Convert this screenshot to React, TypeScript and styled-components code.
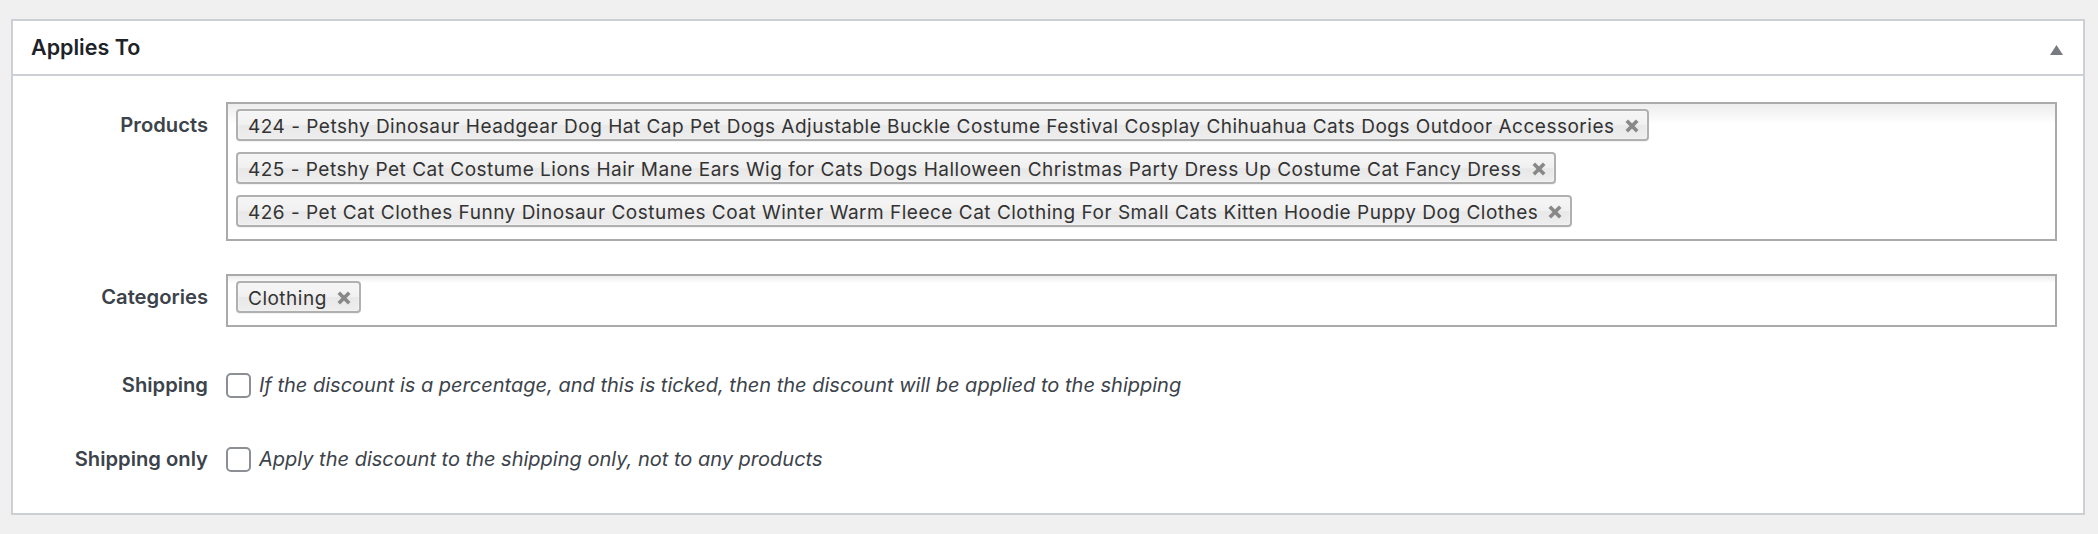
import React from 'react';
import styled, { createGlobalStyle } from 'styled-components';

const GlobalStyle = createGlobalStyle`
  html, body { margin: 0; padding: 0; background: #f0f0f1; }
  body { font-family: Inter, "Liberation Sans", sans-serif; color: #3c434a; }
  * { box-sizing: border-box; }
`;

const Page = styled.div`
  padding: 19px 13px 21px 11px;
`;

const Panel = styled.section`
  background: #fff;
  border: 2px solid #ccd0d4;
`;

const Header = styled.header`
  display: flex;
  align-items: center;
  justify-content: space-between;
  height: 55px;
  padding: 0 20px 0 18px;
  border-bottom: 2px solid #ccd0d4;
`;

const Title = styled.h2`
  margin: 0;
  font-size: 21.5px;
  font-weight: 600;
  color: #1d2327;
  line-height: 1;
`;

const Toggle = styled.svg`
  width: 13px;
  height: 10px;
  margin-top: 5px;
  fill: #787c82;
`;

const Body = styled.div`
  padding: 26px 26px 38px 0;
`;

const Row = styled.div<{ $top?: number; $center?: boolean }>`
  display: grid;
  grid-template-columns: 195px 1fr;
  column-gap: 18px;
  align-items: ${(p) => (p.$center ? 'center' : 'start')};
  margin-top: ${(p) => p.$top ?? 0}px;
  min-height: ${(p) => (p.$center ? '30px' : '0')};
`;

const Label = styled.label<{ $pad?: boolean }>`
  text-align: right;
  font-size: 20.2px;
  font-weight: 600;
  color: #3c434a;
  line-height: 32px;
  padding-top: ${(p) => (p.$pad ? '7px' : '0')};
  white-space: nowrap;
`;

const Choices = styled.ul`
  list-style: none;
  margin: 0;
  padding: 5px 8px 1px;
  border: 2px solid #aaa;
  background: linear-gradient(to bottom, #eee 1%, #fff 15%);
  display: flex;
  flex-direction: column;
  align-items: flex-start;
`;

const Choice = styled.li`
  display: inline-flex;
  align-items: center;
  height: 32px;
  margin-bottom: 11px;
  padding: 4px 8px 0 10px;
  border: 2px solid #b0b0b0;
  border-radius: 4px;
  background: linear-gradient(#f4f4f4 20%, #f0f0f0 50%, #e8e8e8 52%, #eee 100%);
  box-shadow: 0 0 2px #fff inset, 0 1px 0 rgba(0, 0, 0, 0.05);
  color: #333;
  font-size: 19px;
  letter-spacing: 0.5px;
  line-height: 24px;
  white-space: nowrap;
`;

const Remove = styled.svg`
  width: 14px;
  height: 14px;
  margin: -3px 0 0 10px;
  flex: none;
  stroke: #888;
  stroke-width: 3.6;
`;

const CheckLine = styled.div`
  display: flex;
  align-items: center;
  gap: 8px;
`;

const Checkbox = styled.input.attrs({ type: 'checkbox' })`
  appearance: none;
  margin: 0;
  width: 25px;
  height: 25px;
  border: 2px solid #8c8f94;
  border-radius: 5px;
  background: #fff;
  flex: none;
`;

const Description = styled.span`
  font-size: 20px;
  font-style: italic;
  color: #3c434a;
  line-height: 30px;
  white-space: nowrap;
`;

const products = [
  '424 - Petshy Dinosaur Headgear Dog Hat Cap Pet Dogs Adjustable Buckle Costume Festival Cosplay Chihuahua Cats Dogs Outdoor Accessories',
  '425 - Petshy Pet Cat Costume Lions Hair Mane Ears Wig for Cats Dogs Halloween Christmas Party Dress Up Costume Cat Fancy Dress',
  '426 - Pet Cat Clothes Funny Dinosaur Costumes Coat Winter Warm Fleece Cat Clothing For Small Cats Kitten Hoodie Puppy Dog Clothes',
];

function Tag({ text }: { text: string }) {
  return (
    <Choice>
      <span>{text}</span>
      <Remove viewBox="0 0 14 14" aria-hidden>
        <line x1="1.8" y1="1.8" x2="12.2" y2="12.2" />
        <line x1="12.2" y1="1.8" x2="1.8" y2="12.2" />
      </Remove>
    </Choice>
  );
}

export default function App() {
  return (
    <>
      <GlobalStyle />
      <Page>
        <Panel>
          <Header>
            <Title>Applies To</Title>
            <Toggle viewBox="0 0 13 10" aria-hidden>
              <polygon points="6.5,0 13,10 0,10" />
            </Toggle>
          </Header>
          <Body>
            <Row>
              <Label $pad>Products</Label>
              <Choices>
                {products.map((p) => (
                  <Tag key={p} text={p} />
                ))}
              </Choices>
            </Row>
            <Row $top={33}>
              <Label $pad>Categories</Label>
              <Choices>
                <Tag text="Clothing" />
              </Choices>
            </Row>
            <Row $top={42} $center>
              <Label>Shipping</Label>
              <CheckLine>
                <Checkbox />
                <Description>If the discount is a percentage, and this is ticked, then the discount will be applied to the shipping</Description>
              </CheckLine>
            </Row>
            <Row $top={42} $center>
              <Label>Shipping only</Label>
              <CheckLine>
                <Checkbox />
                <Description>Apply the discount to the shipping only, not to any products</Description>
              </CheckLine>
            </Row>
          </Body>
        </Panel>
      </Page>
    </>
  );
}
